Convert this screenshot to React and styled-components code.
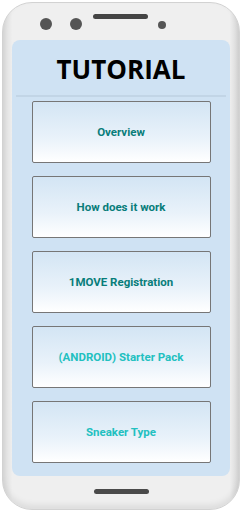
import React from 'react';
import styled, { createGlobalStyle } from 'styled-components';

const GlobalStyle = createGlobalStyle`
  html, body {
    margin: 0;
    padding: 0;
    background: #ffffff;
  }
  body {
    font-family: Roboto, "Liberation Sans", sans-serif;
  }
`;

// phone body
const Phone = styled.div`
  box-sizing: border-box;
  width: 238px;
  height: 508px;
  margin: 2px;
  border-radius: 30px;
  background: linear-gradient(to right, #dcdcdc 0%, #efefef 4%, #efefef 96%, #d6d6d6 100%);
  border: 1px solid #d2d2d2;
  box-shadow: inset 0 -4px 6px rgba(0, 0, 0, 0.08);
  display: flex;
  flex-direction: column;
  align-items: center;
`;

// camera, sensor and speaker row
const TopBar = styled.div`
  box-sizing: border-box;
  width: 100%;
  height: 37px;
  padding-left: 37px;
  display: flex;
  align-items: flex-start;
`;

const Dot = styled.div`
  flex-shrink: 0;
  width: ${(p) => p.$size}px;
  height: ${(p) => p.$size}px;
  margin-top: ${(p) => p.$top}px;
  margin-right: ${(p) => p.$gap}px;
  border-radius: 50%;
  background: #555555;
`;

// speaker slot drawn as a thick top border
const Speaker = styled.div`
  flex-shrink: 0;
  box-sizing: border-box;
  width: 55px;
  height: 5px;
  margin-top: 11px;
  margin-right: 10px;
  border-top: 5px solid #444444;
  border-radius: 3px;
`;

const Screen = styled.div`
  box-sizing: border-box;
  width: 218px;
  height: 436px;
  background: #cfe2f3;
  border-radius: 8px;
  display: flex;
  flex-direction: column;
  align-items: center;
`;

const Header = styled.div`
  width: 210px;
  height: 55px;
  display: flex;
  align-items: center;
  justify-content: center;
  border-bottom: 2px solid #c2d5e6;
`;

const Title = styled.h1`
  margin: 0;
  font-family: "Open Sans", "DejaVu Sans", sans-serif;
  font-weight: 700;
  font-size: 26px;
  color: #000000;
  padding-top: 2px;
`;

const List = styled.div`
  display: flex;
  flex-direction: column;
  gap: 13px;
  padding-top: 4px;
`;

const Item = styled.button`
  box-sizing: border-box;
  width: 179px;
  height: 62px;
  border: 1px solid #767676;
  border-radius: 2px;
  background: linear-gradient(to bottom, #d3e5f4 0%, #e9f2fa 60%, #ffffff 100%);
  display: flex;
  align-items: center;
  justify-content: center;
  padding: 0;
  font-family: Roboto, "Liberation Sans", sans-serif;
  font-weight: 700;
  font-size: 11.5px;
  color: ${(p) => (p.$light ? '#22c0c0' : '#087d7a')};
`;

const BottomBar = styled.div`
  flex: 1;
  display: flex;
  align-items: center;
  justify-content: center;
  padding-bottom: 2px;
`;

const HomeBar = styled.div`
  width: 55px;
  height: 5px;
  border-radius: 3px;
  background: #4a4a4a;
`;

const items = [
  { label: 'Overview' },
  { label: 'How does it work' },
  { label: '1MOVE Registration' },
  { label: '(ANDROID) Starter Pack', light: true },
  { label: 'Sneaker Type', light: true },
];

export default function App() {
  return (
    <>
      <GlobalStyle />
      <Phone>
        <TopBar>
          <Dot $size={12} $top={15} $gap={18} />
          <Dot $size={12} $top={15} $gap={11} />
          <Speaker />
          <Dot $size={8} $top={18} $gap={0} />
        </TopBar>
        <Screen>
          <Header>
            <Title>TUTORIAL</Title>
          </Header>
          <List>
            {items.map((it) => (
              <Item key={it.label} $light={it.light}>
                {it.label}
              </Item>
            ))}
          </List>
        </Screen>
        <BottomBar>
          <HomeBar />
        </BottomBar>
      </Phone>
    </>
  );
}
